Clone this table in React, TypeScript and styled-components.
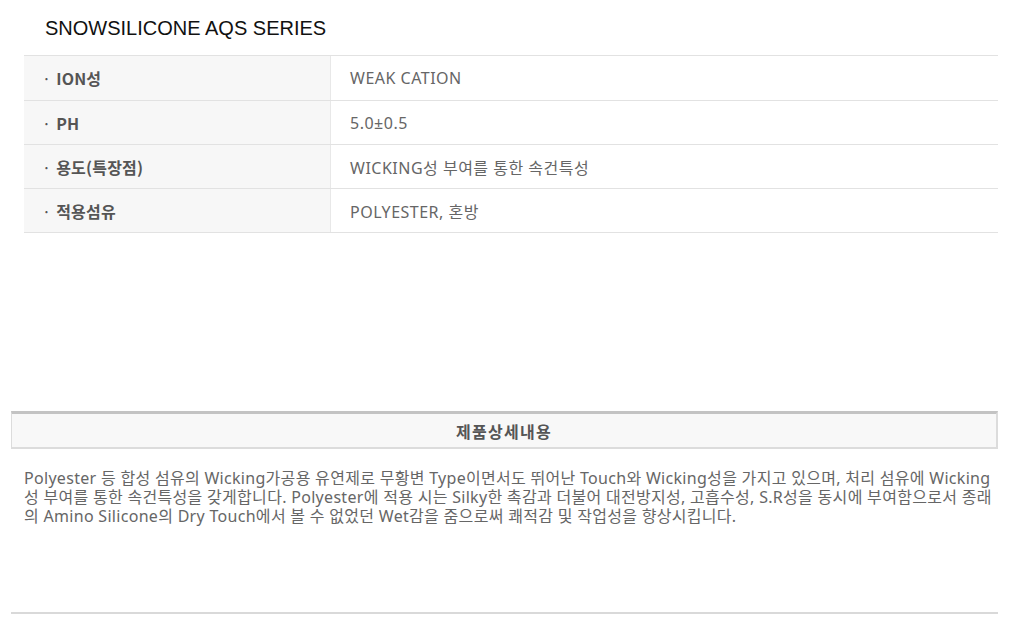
import React from 'react';
import styled, { createGlobalStyle } from 'styled-components';

const GlobalStyle = createGlobalStyle`
  html, body {
    margin: 0;
    padding: 0;
    background: #fff;
  }
  body {
    font-family: 'Noto Sans', 'Noto Sans CJK KR', sans-serif;
  }
`;

const Page = styled.div`
  width: 987px;
  padding: 0 14px 0 11px;
`;

const Title = styled.h2`
  margin: 0;
  height: 55px;
  padding-left: 34px;
  display: flex;
  align-items: center;
  font-family: 'Liberation Sans', Arial, sans-serif;
  font-weight: 400;
  font-size: 20px;
  color: #111;
  padding-top: 2px;
  box-sizing: border-box;
`;

const SpecTable = styled.div`
  margin-left: 13px;
  border-top: 1px solid #e2e2e2;
`;

const SpecRow = styled.div`
  display: grid;
  grid-template-columns: 307px 1fr;
  height: 44px;
  border-bottom: 1px solid #e2e2e2;
  box-sizing: border-box;
  &:first-child {
    height: 45px;
  }
`;

const Label = styled.div`
  display: flex;
  align-items: center;
  padding-left: 18px;
  background: #f7f7f7;
  border-right: 1px solid #e8e8e8;
  font-family: 'Noto Sans CJK KR', 'Noto Sans', sans-serif;
  font-weight: 700;
  font-size: 16px;
  color: #555;
  letter-spacing: 0.2px;
`;

const Dot = styled.span`
  margin-right: 5px;
  font-weight: 400;
`;

const Value = styled.div`
  display: flex;
  align-items: center;
  padding-left: 19px;
  font-family: 'Noto Sans', 'Noto Sans CJK KR', sans-serif;
  font-size: 16px;
  color: #666;
  letter-spacing: 0.5px;
`;

const DetailHeader = styled.div`
  margin-top: 178px;
  height: 38px;
  box-sizing: border-box;
  border-top: 3px solid #c3c3c3;
  border-left: 1px solid #dcdcdc;
  border-right: 2px solid #dcdcdc;
  border-bottom: 2px solid #dcdcdc;
  background: #f8f8f8;
  display: flex;
  align-items: center;
  justify-content: center;
  font-family: 'Noto Sans CJK KR', sans-serif;
  font-weight: 700;
  font-size: 16px;
  color: #555;
  letter-spacing: 1.3px;
`;

const Description = styled.p`
  margin: 20px 0 0;
  padding: 0 3px 0 13px;
  height: 143px;
  font-family: 'Noto Sans', 'Noto Sans CJK KR', sans-serif;
  font-size: 16px;
  line-height: 19px;
  color: #666;
  letter-spacing: 0.3px;
`;

const BottomRule = styled.hr`
  margin: 0;
  border: none;
  height: 2px;
  background: #d9d9d9;
`;

const specs: [string, string][] = [
  ['ION성', 'WEAK CATION'],
  ['PH', '5.0±0.5'],
  ['용도(특장점)', 'WICKING성 부여를 통한 속건특성'],
  ['적용섬유', 'POLYESTER, 혼방'],
];

export default function App() {
  return (
    <Page>
      <GlobalStyle />
      <Title>SNOWSILICONE AQS SERIES</Title>
      <SpecTable>
        {specs.map(([label, value]) => (
          <SpecRow key={label}>
            <Label>
              <Dot>·</Dot>
              {label}
            </Label>
            <Value>{value}</Value>
          </SpecRow>
        ))}
      </SpecTable>
      <DetailHeader>제품상세내용</DetailHeader>
      <Description>
        Polyester 등 합성 섬유의 Wicking가공용 유연제로 무황변 Type이면서도 뛰어난 Touch와 Wicking성을 가지고 있으며, 처리 섬유에 Wicking성 부여를 통한 속건특성을 갖게합니다. Polyester에 적용 시는 Silky한 촉감과 더불어 대전방지성, 고흡수성, S.R성을 동시에 부여함으로서 종래의 Amino Silicone의 Dry Touch에서 볼 수 없었던 Wet감을 줌으로써 쾌적감 및 작업성을 향상시킵니다.
      </Description>
      <BottomRule />
    </Page>
  );
}
